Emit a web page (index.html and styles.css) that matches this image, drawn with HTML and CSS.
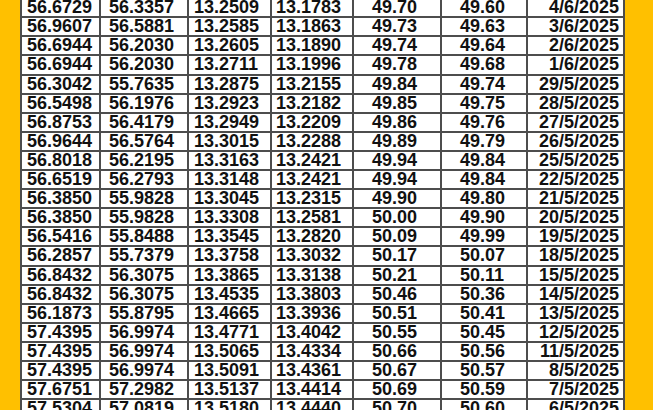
FILE: index.html
```html
<!DOCTYPE html>
<html>
<head>
<meta charset="utf-8">
<link rel="stylesheet" href="styles.css">
</head>
<body>
<div class="page">
  <div class="grid" id="grid">
    <div class="c c1">56.6729</div><div class="c c2">56.3357</div><div class="c c3">13.2509</div><div class="c c4">13.1783</div><div class="c c5">49.70</div><div class="c c6">49.60</div><div class="c c7">4/6/2025</div>
    <div class="c c1">56.9607</div><div class="c c2">56.5881</div><div class="c c3">13.2585</div><div class="c c4">13.1863</div><div class="c c5">49.73</div><div class="c c6">49.63</div><div class="c c7">3/6/2025</div>
    <div class="c c1">56.6944</div><div class="c c2">56.2030</div><div class="c c3">13.2605</div><div class="c c4">13.1890</div><div class="c c5">49.74</div><div class="c c6">49.64</div><div class="c c7">2/6/2025</div>
    <div class="c c1">56.6944</div><div class="c c2">56.2030</div><div class="c c3">13.2711</div><div class="c c4">13.1996</div><div class="c c5">49.78</div><div class="c c6">49.68</div><div class="c c7">1/6/2025</div>
    <div class="c c1">56.3042</div><div class="c c2">55.7635</div><div class="c c3">13.2875</div><div class="c c4">13.2155</div><div class="c c5">49.84</div><div class="c c6">49.74</div><div class="c c7">29/5/2025</div>
    <div class="c c1">56.5498</div><div class="c c2">56.1976</div><div class="c c3">13.2923</div><div class="c c4">13.2182</div><div class="c c5">49.85</div><div class="c c6">49.75</div><div class="c c7">28/5/2025</div>
    <div class="c c1">56.8753</div><div class="c c2">56.4179</div><div class="c c3">13.2949</div><div class="c c4">13.2209</div><div class="c c5">49.86</div><div class="c c6">49.76</div><div class="c c7">27/5/2025</div>
    <div class="c c1">56.9644</div><div class="c c2">56.5764</div><div class="c c3">13.3015</div><div class="c c4">13.2288</div><div class="c c5">49.89</div><div class="c c6">49.79</div><div class="c c7">26/5/2025</div>
    <div class="c c1">56.8018</div><div class="c c2">56.2195</div><div class="c c3">13.3163</div><div class="c c4">13.2421</div><div class="c c5">49.94</div><div class="c c6">49.84</div><div class="c c7">25/5/2025</div>
    <div class="c c1">56.6519</div><div class="c c2">56.2793</div><div class="c c3">13.3148</div><div class="c c4">13.2421</div><div class="c c5">49.94</div><div class="c c6">49.84</div><div class="c c7">22/5/2025</div>
    <div class="c c1">56.3850</div><div class="c c2">55.9828</div><div class="c c3">13.3045</div><div class="c c4">13.2315</div><div class="c c5">49.90</div><div class="c c6">49.80</div><div class="c c7">21/5/2025</div>
    <div class="c c1">56.3850</div><div class="c c2">55.9828</div><div class="c c3">13.3308</div><div class="c c4">13.2581</div><div class="c c5">50.00</div><div class="c c6">49.90</div><div class="c c7">20/5/2025</div>
    <div class="c c1">56.5416</div><div class="c c2">55.8488</div><div class="c c3">13.3545</div><div class="c c4">13.2820</div><div class="c c5">50.09</div><div class="c c6">49.99</div><div class="c c7">19/5/2025</div>
    <div class="c c1">56.2857</div><div class="c c2">55.7379</div><div class="c c3">13.3758</div><div class="c c4">13.3032</div><div class="c c5">50.17</div><div class="c c6">50.07</div><div class="c c7">18/5/2025</div>
    <div class="c c1">56.8432</div><div class="c c2">56.3075</div><div class="c c3">13.3865</div><div class="c c4">13.3138</div><div class="c c5">50.21</div><div class="c c6">50.11</div><div class="c c7">15/5/2025</div>
    <div class="c c1">56.8432</div><div class="c c2">56.3075</div><div class="c c3">13.4535</div><div class="c c4">13.3803</div><div class="c c5">50.46</div><div class="c c6">50.36</div><div class="c c7">14/5/2025</div>
    <div class="c c1">56.1873</div><div class="c c2">55.8795</div><div class="c c3">13.4665</div><div class="c c4">13.3936</div><div class="c c5">50.51</div><div class="c c6">50.41</div><div class="c c7">13/5/2025</div>
    <div class="c c1">57.4395</div><div class="c c2">56.9974</div><div class="c c3">13.4771</div><div class="c c4">13.4042</div><div class="c c5">50.55</div><div class="c c6">50.45</div><div class="c c7">12/5/2025</div>
    <div class="c c1">57.4395</div><div class="c c2">56.9974</div><div class="c c3">13.5065</div><div class="c c4">13.4334</div><div class="c c5">50.66</div><div class="c c6">50.56</div><div class="c c7">11/5/2025</div>
    <div class="c c1">57.4395</div><div class="c c2">56.9974</div><div class="c c3">13.5091</div><div class="c c4">13.4361</div><div class="c c5">50.67</div><div class="c c6">50.57</div><div class="c c7">8/5/2025</div>
    <div class="c c1">57.6751</div><div class="c c2">57.2982</div><div class="c c3">13.5137</div><div class="c c4">13.4414</div><div class="c c5">50.69</div><div class="c c6">50.59</div><div class="c c7">7/5/2025</div>
    <div class="c c1">57.5304</div><div class="c c2">57.0819</div><div class="c c3">13.5180</div><div class="c c4">13.4440</div><div class="c c5">50.70</div><div class="c c6">50.60</div><div class="c c7">6/5/2025</div>
  </div>
</div>
</body>
</html>
```

FILE: styles.css
```css
html, body {
  margin: 0;
  padding: 0;
  background: #FFC000;
  height: 410px;
  overflow: hidden;
}
.page {
  padding-left: 20px;
}
.grid {
  display: grid;
  grid-template-columns: 77px 86px 81px 80px 86px 84px 95px;
  grid-auto-rows: 17.1px;
  gap: 2px;
  padding: 2px;
  width: max-content;
  background: #4d4d4d;
  margin-top: -2.8px;
  font-family: "Liberation Sans", Arial, sans-serif;
  font-weight: bold;
  font-size: 18px;
  color: #111;
}
.c {
  background: #fff;
  line-height: 17.6px;
  white-space: nowrap;
}
.c1 { padding-left: 5px; }
.c2 { padding-left: 8px; }
.c3 { padding-left: 5px; }
.c4 { padding-left: 4px; }
.c5 { padding-left: 18px; }
.c6 { padding-left: 18px; }
.c7 { text-align: right; padding-right: 4px; }
```
